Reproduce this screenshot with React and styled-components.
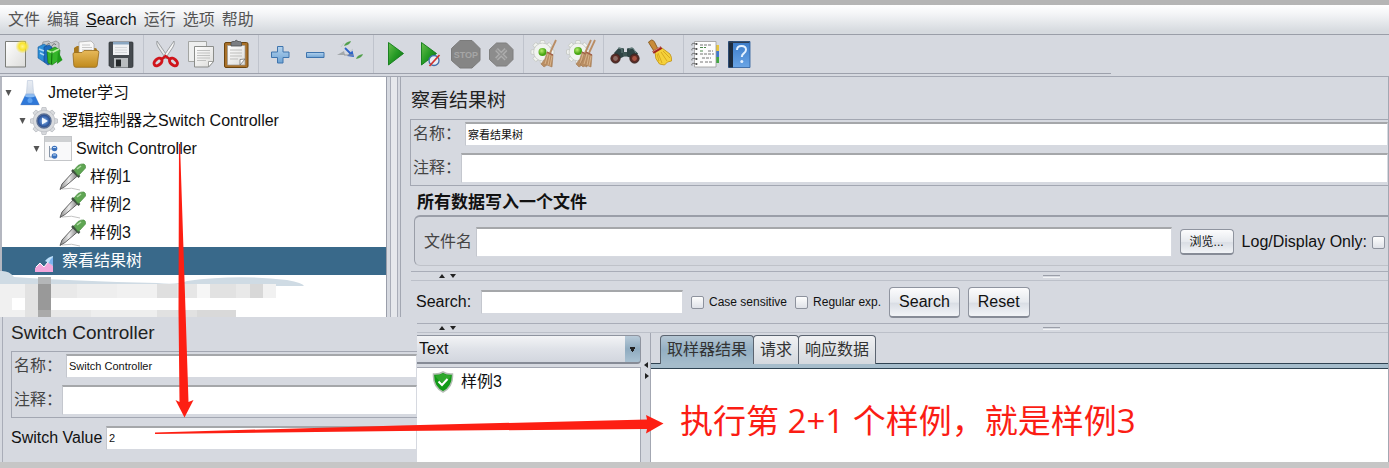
import React, { useState } from 'react';
import styled, { createGlobalStyle, css } from 'styled-components';

const GlobalStyle = createGlobalStyle`
  * { box-sizing: border-box; }

  body {
    margin: 0;
    background: #d6d9e0;
    color: #111;
    font-family: 'Liberation Sans', 'Noto Sans CJK SC', sans-serif;
    font-size: 16px;
    line-height: 20px;
  }

  button, input, select { font: inherit; color: inherit; }
`;

// --- Window frame ---

const Window = styled.div`
  position: relative;
  display: flex;
  flex-direction: column;
  min-height: 100vh;
  overflow: hidden;
  border-top: 5px solid #b5b5b5;
  border-bottom: 6px solid #c6c6c6;
`;

const MenuBar = styled.nav`
  display: flex;
  align-items: center;
  gap: 7px;
  height: 30px;
  padding: 0 8px;
  background: linear-gradient(#fff 0%, #f4f5f7 30%, #d6dadf 90%);
  border-bottom: 1px solid #9a9ea8;
`;

const MenuItem = styled.button`
  padding: 0;
  border: none;
  background: none;
  color: ${props => (props.$latin ? '#111' : '#555')};
  white-space: nowrap;
`;

const ToolBarArea = styled.div`
  padding-bottom: 2px;
  border-bottom: 1px solid #a3a7b2;
`;

const ToolBar = styled.div`
  display: flex;
  align-items: center;
  gap: 2px;
  height: 39px;
  width: 80%;
  border-bottom: 1px solid #9da1ac;
`;

const ToolButton = styled.button`
  display: flex;
  width: 33px;
  padding: 0;
  border: none;
  background: none;
`;

const ToolSeparator = styled.span`
  align-self: stretch;
  width: 8px;
  background: linear-gradient(90deg, transparent 3px, #bfc3cc 3px, #bfc3cc 4px, transparent 4px);
`;

const Workspace = styled.main`
  position: relative;
  display: flex;
  flex: 1;
`;

// --- Test plan tree ---

const TreePane = styled.div`
  position: relative;
  width: 387px;
  flex: none;
  padding: 2px 0 0;
  background: #fff;
  border-left: 2px solid #b4b7c0;
  border-right: 1px solid #9a9eaa;
`;

const Tree = styled.ul`
  margin: 0;
  padding: 0;
  list-style: none;
`;

const TreeRow = styled.li`
  display: flex;
  align-items: center;
  height: 28px;
  padding-left: ${props => props.$level * 14}px;
  white-space: nowrap;
  ${props => props.$selected && css`
    background: #39698a;
    color: #fff;
  `}
`;

const Twisty = styled.span`
  width: 14px;
  svg { display: block; margin-left: 3px; }
`;

const TreeIcon = styled.span`
  display: flex;
  width: 32px;
`;

const Smudge = styled.svg`
  position: absolute;
  left: -2px;
  top: 170px;
`;

const Splitter = styled.div`
  width: 13px;
  flex: none;
  background: linear-gradient(90deg, transparent 3px, #a9adb8 3px, #a9adb8 4px, #e6e8ec 4px, #e6e8ec 10px, #a9adb8 10px, #a9adb8 11px, transparent 11px);
`;

// --- Forms ---

const Detail = styled.section`
  flex: 1;
  min-width: 0;
  display: flex;
  flex-direction: column;
  border-left: 1px solid #a3a7b2;
  border-right: 1px solid #a3a7b2;
`;

const PaneTitle = styled.h1`
  margin: 0;
  padding: ${props => (props.$compact ? '4px 0 6px 8px' : '12px 0 6px 10px')};
  font-size: 19px;
  line-height: 24px;
  font-weight: normal;
  color: #222;
`;

const NameGroup = styled.div`
  display: flex;
  flex-direction: column;
  gap: 7px;
  margin-left: ${props => (props.$compact ? 8 : 9)}px;
  padding: 2px 0 2px 2px;
  border: 1px solid #a3a7b2;
  border-right: none;
`;

const FieldRow = styled.div`
  display: flex;
  align-items: center;
`;

const FieldLabel = styled.label`
  width: ${props => props.$width}px;
  flex: none;
  color: ${props => (props.$latin ? '#111' : '#444')};
`;

const TextField = styled.input`
  min-width: 0;
  flex: ${props => (props.$width ? 'none' : 1)};
  width: ${props => (props.$width ? `${props.$width}px` : 'auto')};
  height: ${props => (props.$tall ? 30 : 24)}px;
  padding: 0 2px 2px;
  border: 1px solid #c4c7ce;
  border-top: 2px solid #a5a7aa;
  border-right-color: #d6d9e0;
  border-bottom-color: #d6d9e0;
  background: #fff;
  font-size: 11px;
  outline: none;
`;

const SectionTitle = styled.h2`
  margin: 0;
  padding: 7px 0 2px 16px;
  font-size: 17px;
  line-height: 20px;
  font-weight: bold;
`;

const FileGroup = styled.div`
  display: flex;
  align-items: center;
  height: 51px;
  margin-left: 13px;
  padding: 2px 3px 0 9px;
  border: 1px solid #9a9ea8;
  border-top: 2px solid #9a9ea8;
  border-right: none;
  border-bottom-color: #bfc2c9;
  border-radius: 6px 0 0 6px;
  background: #d4d7de;
`;

const PushButton = styled.button`
  flex: none;
  height: ${props => (props.$small ? 26 : 31)}px;
  padding: 0 9px;
  border: 1px solid #8f949f;
  border-bottom: 2px solid #868b96;
  border-radius: 4px;
  background: linear-gradient(#fcfcfd, #e6e9ee 50%, #dadee5 55%, #f2f4f7);
  font-size: ${props => (props.$small ? 12 : 16)}px;
  line-height: 20px;
`;

const CheckLabel = styled.label`
  margin-left: ${props => (props.$small ? 5 : 8)}px;
  white-space: nowrap;
  font-size: ${props => (props.$small ? 12 : 16)}px;
`;

const Check = styled.input`
  appearance: none;
  flex: none;
  width: 13px;
  height: 13px;
  margin: 0;
  border: 1px solid #8d929d;
  border-radius: 2px;
  background: linear-gradient(#fdfdfd, #dfe2e8);
  &:checked { background: #39698a; }
`;

const Spacer = styled.span`
  flex: none;
  width: ${props => props.$width || 8}px;
`;

const SplitBar = styled.div`
  display: flex;
  align-items: center;
  height: 10px;
  margin: ${props => (props.$spaced ? '5px' : '0')} 0 0 10px;
  border-top: 1px solid #a9adb8;
  border-bottom: 1px solid #bcc0c9;
  svg { margin-left: 28px; }
`;

const Grip = styled.span`
  width: 17px;
  height: 3px;
  margin-left: 60%;
  border-top: 1px solid #9a9ea8;
  border-bottom: 1px solid #f2f3f5;
`;

const SearchRow = styled.div`
  display: flex;
  align-items: center;
  height: 42px;
  padding-left: 15px;
`;

// --- Results area ---

const Results = styled.div`
  display: flex;
  flex: 1;
  padding-left: 15px;
`;

const ResultList = styled.div`
  display: flex;
  flex-direction: column;
  width: 225px;
  flex: none;
`;

const Renderer = styled.select`
  appearance: none;
  height: 29px;
  margin: 2px 0 3px;
  padding: 0 2px;
  border: 1px solid #8f949f;
  border-bottom: 2px solid #868b96;
  border-radius: 0 4px 4px 0;
  background:
    linear-gradient(#222, #222) right 5px top 11px / 5px 2px no-repeat,
    linear-gradient(#222, #222) right 6px top 13px / 3px 2px no-repeat,
    linear-gradient(#222, #222) right 7px top 15px / 1px 1px no-repeat,
    linear-gradient(#b9cbd9, #8fabc0 50%, #a9c1d2) right / 15px 100% no-repeat,
    linear-gradient(#f3f4f6, #dfe2e8 50%, #d2d6de);
`;

const SampleList = styled.ul`
  flex: 1;
  margin: 0;
  padding: 3px 0 0 16px;
  list-style: none;
  background: #fff;
  border-top: 1px solid #a3a7b2;
  border-right: 1px solid #a3a7b2;
`;

const Sample = styled.li`
  display: flex;
  align-items: center;
  gap: 7px;
`;

const ResultSplitter = styled.div`
  width: 10px;
  flex: none;
  padding: 29px 0 0 2px;
  border-right: 1px solid #a3a7b2;
  svg { display: block; }
`;

const TabPane = styled.div`
  display: flex;
  flex-direction: column;
  flex: 1;
  min-width: 0;
`;

const TabStrip = styled.div`
  display: flex;
  height: 35px;
  padding: 2px 0 0 9px;
  border-bottom: 4px solid #a5bccb;
  box-shadow: inset 0 -1px #2f4352, 0 1px #2f4352;
`;

const Tab = styled.button`
  padding: 0 6px;
  margin-right: -1px;
  border: 1px solid #5b6470;
  border-bottom: none;
  border-radius: 4px 4px 0 0;
  background: ${props => (props.$active
    ? 'linear-gradient(#b5c6d3, #93afc3 50%, #a5bccb)'
    : 'linear-gradient(#f0f1f3, #dfe2e6 60%, #d4d8de)')};
  color: #333;
  white-space: nowrap;
`;

const TabBody = styled.div`
  flex: 1;
  margin-top: 1px;
  background: #fff;
`;

// --- Things laid over the window ---

const SwitchPanel = styled.section`
  position: absolute;
  left: 0;
  bottom: 0;
  width: 417px;
  height: 145px;
  padding-left: 3px;
  background: #d6d9e0;
  box-shadow: inset 2px 0 #d6d9e0, inset 3px 0 #a9adb8;
`;

const ValueRow = styled.div`
  display: flex;
  align-items: center;
  padding: 8px 0 0 8px;
`;

const Arrows = styled.svg`
  position: absolute;
  left: 0;
  top: -5px;
  pointer-events: none;
`;

const Note = styled.p`
  position: absolute;
  left: 680px;
  top: 392px;
  margin: 0;
  color: #fb1d14;
  font-family: 'Open Sans', 'Noto Sans CJK SC', sans-serif;
  font-size: 33px;
  line-height: 48px;
  white-space: nowrap;
`;

// --- Icons ---

const Defs = () => (
  <svg width="0" height="0" style={{ position: 'absolute' }} aria-hidden="true">
    <defs>
      <linearGradient id="paper" x2="1" y2="1"><stop stopColor="#fff" /><stop offset="1" stopColor="#dcdcda" /></linearGradient>
      <radialGradient id="sun"><stop stopColor="#fff48a" /><stop offset=".5" stopColor="#f8e32b" /><stop offset="1" stopColor="#f8e32b" stopOpacity="0" /></radialGradient>
      <linearGradient id="folder" x2="0" y2="1"><stop stopColor="#e7b95a" /><stop offset="1" stopColor="#c08a1c" /></linearGradient>
      <linearGradient id="sky" x2="0" y2="1"><stop stopColor="#b4d3ee" /><stop offset="1" stopColor="#6ea3d4" /></linearGradient>
      <linearGradient id="go" x2="1" y2="1"><stop stopColor="#6bbf4e" /><stop offset=".5" stopColor="#259b25" /><stop offset="1" stopColor="#0d6b12" /></linearGradient>
      <linearGradient id="book" x2="0" y2="1"><stop stopColor="#3a7bc8" /><stop offset="1" stopColor="#6aa5e6" /></linearGradient>
      <linearGradient id="flask" x2="0" y2="1"><stop stopColor="#e9edf3" /><stop offset=".5" stopColor="#d3dce8" /><stop offset=".65" stopColor="#3f86df" /><stop offset="1" stopColor="#1455bd" /></linearGradient>
      <radialGradient id="blueBall"><stop stopColor="#b9d6f6" /><stop offset=".5" stopColor="#4a78bd" /><stop offset="1" stopColor="#1c3d80" /></radialGradient>
      <radialGradient id="greenBall" cx=".4" cy=".35"><stop stopColor="#b8ee6d" /><stop offset="1" stopColor="#47a512" /></radialGradient>
      <linearGradient id="steel" x2="1" y2="0"><stop stopColor="#888" /><stop offset=".5" stopColor="#eee" /><stop offset="1" stopColor="#777" /></linearGradient>
    </defs>
  </svg>
);

const Gear = ({ cx, cy, r, fill, stroke }) => (
  <g fill={fill} stroke={stroke} strokeWidth=".8">
    {[0, 45, 90, 135, 180, 225, 270, 315].map(a => (
      <path key={a} transform={`rotate(${a} ${cx} ${cy})`} d={`M${cx - 2.8} ${cy - r + 4} l.8 -4 h4 l.8 4z`} />
    ))}
    <circle cx={cx} cy={cy} r={r - 2.6} />
  </g>
);

const SmallBroom = ({ x = 0 }) => (
  <g transform={`translate(${x} 0)`}>
    <path d="M26 2 L20 15" stroke="#b98d64" strokeWidth="1.8" />
    <path d="M17 14 L23 17 L22 29 L17 27 L14 29 L11 26 Q16 21 17 14z" fill="#b88d62" stroke="#a27b54" strokeWidth=".6" />
    <path d="M18 16 L15 26 M20 17 L18 27 M22 18 L20 28" stroke="#dfbd94" strokeWidth=".8" />
    <path d="M17 14 L23 17" stroke="#a15a45" strokeWidth="1.2" />
  </g>
);

const toolIcons = {
  new: (
    <>
      <path d="M5.5 3.5h20v25.500h-20z" fill="url(#paper)" stroke="#7b7d78" />
      <circle cx="22.500" cy="8.500" r="7" fill="url(#sun)" />
    </>
  ),
  templates: (
    <>
      <path d="M7 8l1-4 6-1 2 2 5-2 3 2v6H8z" fill="#c6c9cb" stroke="#8e9193" strokeWidth=".8" />
      <path d="M11 8q2-4 4-2M17 8q2-4 4-1" fill="none" stroke="#77797b" />
      <path d="M3 9l6-3 3 2v15l-3 1-6-4z" fill="#2d8fd6" stroke="#1a5a9c" strokeWidth=".6" />
      <path d="M9 9l5-2 3 2v16l-4 2-4-3z" fill="#1d6cc0" stroke="#124686" strokeWidth=".6" />
      <path d="M12 13l8-4 5 3-1 10-7 5-4-2z" fill="#35b52a" stroke="#126b0e" strokeWidth=".6" />
      <path d="M12 12.500l5 2 7-3.500" fill="none" stroke="#b5ee9f" strokeWidth="1.800" />
      <path d="M17 14l-.5 12" stroke="#0f6f0d" />
      <path d="M23 13l4.500 9-5.500 4z" fill="#1f9a1a" />
      <path d="M4 11l5 2M5 15l4 2" stroke="#a8d6f5" strokeWidth="1.400" />
    </>
  ),
  open: (
    <>
      <path d="M4 10l3-2h6l2 2h10q2 0 2 2v15H4z" fill="#a8771b" />
      <path d="M9 4l12-1 3 3v12H9z" fill="#f8f8f8" stroke="#a7a7a7" strokeWidth=".7" />
      <path d="M12 7h8M12 9.500h10M12 12h10" stroke="#bbb" strokeWidth=".8" />
      <path d="M3 16q0-1.500 2-1.500h7l2-2h13q2 0 1.800 2l-1.600 13q-.3 1.800-2 1.800H6q-2 0-2.200-2z" fill="url(#folder)" stroke="#96691a" strokeWidth=".8" />
    </>
  ),
  save: (
    <>
      <path d="M4 5q0-1 1-1h22q1 0 1 1v23q0 1.500-1.500 1.500H6L4 27.500z" fill="#454a4f" stroke="#2c3033" strokeWidth=".7" />
      <path d="M8 4h16v13H8z" fill="#eff1f3" />
      <path d="M8 4h16v2.500H8z" fill="#8aa7c2" />
      <path d="M10 9.500h12M10 12h12M10 14.500h12" stroke="#d3d6d9" />
      <path d="M9 20h14v9.500H9z" fill="#b9bdc0" />
      <path d="M11 21.500h5v7h-5z" fill="#23272a" />
    </>
  ),
  cut: (
    <>
      <path d="M7 3q-1 3 1 6l8 12 2-2z" fill="#e9eaeb" stroke="#8c8f92" strokeWidth=".8" />
      <path d="M24 3q1 3-1 6l-8 12-2-2z" fill="#f7f7f7" stroke="#8c8f92" strokeWidth=".8" />
      <ellipse cx="8" cy="24" rx="3" ry="4.600" transform="rotate(48 8 24)" fill="none" stroke="#d0141b" strokeWidth="3" />
      <ellipse cx="23.500" cy="24" rx="3" ry="4.600" transform="rotate(-48 23.500 24)" fill="none" stroke="#d0141b" strokeWidth="3" />
      <path d="M12 21l3.500-3 4 3" fill="none" stroke="#d0141b" strokeWidth="2.400" />
    </>
  ),
  copy: (
    <>
      <path d="M3.500 3.500h18v20h-18z" fill="#eeefef" stroke="#a3a5a3" />
      <path d="M9.500 8.500h19v15l-5 5.500h-14z" fill="url(#paper)" stroke="#8b8d8a" />
      <path d="M28.500 23.500l-5 5.500v-5.500z" fill="#fff" stroke="#8b8d8a" strokeWidth=".8" />
      <path d="M12 12.500h13M12 15h13M12 17.500h13M12 20h13M12 22.500h9" stroke="#c0c1c0" />
    </>
  ),
  paste: (
    <>
      <rect x="4.500" y="4.500" width="23.500" height="25" rx="1.500" fill="#a9712a" stroke="#6b450f" />
      <path d="M7.500 7.500h17.500v19.500H7.500z" fill="url(#paper)" stroke="#9b9b98" strokeWidth=".7" />
      <path d="M11 5q0-1.500 2-1.500h1.500Q16.300 1 18 3.500h1.500q2 0 2 1.500v3H11z" fill="#7b7e82" stroke="#4c4e50" strokeWidth=".8" />
      <path d="M10 12h12M10 15h12M10 18h12M10 21h8" stroke="#bdbdbb" />
      <path d="M25 21l-5 6v-5.500z" fill="#fff" stroke="#666" strokeWidth=".7" />
    </>
  ),
  plus: <path d="M12.500 8.500h5.500v5.500h6v5.500h-6V25h-5.500v-5.500h-6V14h6z" fill="url(#sky)" stroke="#3f74ad" />,
  minus: <path d="M6.500 14.500h17.500v5H6.500z" fill="url(#sky)" stroke="#3f74ad" />,
  toggle: (
    <>
      <path d="M2 17l7-4 1 4z" fill="#a3a8ab" />
      <path d="M9 5l-3 4M18 11l-5 4" stroke="#c3c8cc" />
      <path d="M10 10l6 6" stroke="#2c62c9" strokeWidth="1.800" />
      <path d="M19 19l-7-1 5.500-5.500z" fill="#2c62c9" />
      <path d="M9 8q1-4 7-5-1 4-7 5z" fill="#53a04d" />
      <path d="M21 21q1-4 7-5-1 4-7 5z" fill="#53a04d" />
      <path d="M9 17h9" stroke="#999" />
    </>
  ),
  start: <path d="M8.500 4.500L23.500 15.500 8.500 27z" fill="url(#go)" stroke="#0f7a16" strokeWidth=".9" />,
  startNoPause: (
    <>
      <path d="M6.500 4.500L21.500 15.500 6.500 27z" fill="url(#go)" stroke="#0f7a16" strokeWidth=".9" />
      <circle cx="19" cy="22.500" r="5" fill="#e9eef5" stroke="#426ea9" strokeWidth="1.300" />
      <path d="M14.500 28L24.500 17" stroke="#d2342f" strokeWidth="1.800" />
    </>
  ),
  stop: (
    <>
      <path d="M10 2.500h12L30 10.500v12L22 30H10L1.500 22.500v-12z" fill="#858585" stroke="#7b7b7b" />
      <text x="15.800" y="20" textAnchor="middle" fontSize="9" fontWeight="bold" fontFamily="Liberation Sans" fill="#a6a6a6">STOP</text>
    </>
  ),
  shutdown: (
    <>
      <path d="M11.500 5h10L28 11.500v10L21.500 28h-10L4.500 21.500v-10z" fill="#8c8c8c" stroke="#7f7f7f" />
      <path d="M11.500 11.500l9.500 9.500M21 11.500L11.500 21" stroke="#adadad" strokeWidth="4" />
      <path d="M11.500 11.500l9.500 9.500M21 11.500L11.500 21" stroke="#939393" strokeWidth="1.500" />
    </>
  ),
  clear: (
    <>
      <Gear cx={12.5} cy={14} r={11.5} fill="#f1f3f0" stroke="#c3c6c1" />
      <circle cx="12.500" cy="14" r="4" fill="url(#greenBall)" />
      <SmallBroom />
    </>
  ),
  clearAll: (
    <>
      <Gear cx={13} cy={14} r={11.5} fill="#f1f3f0" stroke="#c3c6c1" />
      <circle cx="13" cy="13" r="4" fill="url(#greenBall)" />
      <SmallBroom />
      <SmallBroom x={4} />
    </>
  ),
  search: (
    <>
      <path d="M4 15L9 9.500l5 1v5h3v-5l5-1 6 6-3 6-8-3h-3l-6 3z" fill="#2e4444" />
      <path d="M8 10l4 1v4M19 11l4-1 3 5" fill="none" stroke="#6b8584" />
      <circle cx="5.500" cy="20.500" r="4.600" fill="#5a2a24" stroke="#392522" />
      <circle cx="5.500" cy="20.500" r="2.400" fill="#8b6a63" />
      <circle cx="24.500" cy="20.500" r="4.600" fill="#5a2a24" stroke="#392522" />
      <circle cx="24.500" cy="20.500" r="2.400" fill="#a85342" />
      <path d="M13 14h4v4h-4z" fill="#3d5553" />
    </>
  ),
  reset: (
    <>
      <path d="M3.500 4l3-2q2 0 3 2l4 8-4 2-5-8z" fill="#c88b39" stroke="#7c4f12" strokeWidth=".8" />
      <path d="M10 14l7-4 8 6q2 3 1.500 7l-4 1-3 3-5-1q-5-5-4.500-12z" fill="#f5d13a" stroke="#c08f12" strokeWidth=".8" />
      <path d="M13 15l4 10M16 14l6 9M18 13l7 7M12 16l2 7" stroke="#cf9e18" strokeWidth=".8" />
      <path d="M8 14.500l8.500-5" stroke="#a1261d" strokeWidth="3" />
      <path d="M8 13.500l7.500-4.500" stroke="#e8b6a8" strokeWidth=".7" />
    </>
  ),
  functions: (
    <>
      <path d="M26 7h3v6h-3z" fill="#e8c53c" />
      <path d="M26 13h3v6h-3z" fill="#3e78cf" />
      <path d="M26 19h3v6h-3z" fill="#42a842" />
      <path d="M4.500 3.500H26v25.500H4.500z" fill="#fdfdfd" stroke="#999" strokeWidth=".8" />
      {[6, 11, 16, 21, 26].map(y => (
        <g key={y}>
          <circle cx="6.500" cy={y} r="1" fill="#444" />
          <path d={`M6 ${y} q-5 -2 -4 1.500`} fill="none" stroke="#666" strokeWidth=".9" />
        </g>
      ))}
      <path d="M10 7h12M18 13h5M10 16h14M12 20h9M10 24h3M15 24h8" stroke="#777" strokeDasharray="3 1" />
      <path d="M10 9.500h6M10 13h4" stroke="#4c8a4c" strokeDasharray="3 1" />
    </>
  ),
  help: (
    <>
      <path d="M3.500 3.500H25V29.500H3.500z" fill="url(#book)" stroke="#2a5c9b" strokeWidth=".8" />
      <path d="M3.500 3.500H8V29.500H3.500z" fill="#1d2c3e" />
      <path d="M4 3.500h21l-1 1.500H4z" fill="#2c3d52" />
      <path d="M12 12q0-4 4.500-4t4.500 3.800q0 2-2.200 3.500-2 1.400-2 3.700" fill="none" stroke="#e4f1ff" strokeWidth="2" />
      <circle cx="16.800" cy="23.500" r="1.500" fill="#e4f1ff" />
    </>
  ),
};

const ToolIcon = ({ name }) => (
  <svg width="32" height="32" viewBox="0 0 32 32" fill="none">{toolIcons[name]}</svg>
);

const FlaskIcon = () => (
  <svg width="28" height="28" viewBox="0 0 28 28">
    <path d="M11.500 1.500h5l1 12 6 12.500H4.500l6-12.500z" fill="url(#flask)" stroke="#b9c6da" strokeWidth=".6" />
    <path d="M9 17l10 0 4 8.500H5z" fill="#2f78d8" />
    <ellipse cx="14" cy="17" rx="5" ry="1.400" fill="#8bbcf2" />
    <circle cx="14" cy="21.500" r="2.500" fill="#5da1f0" />
  </svg>
);

const GroupIcon = () => (
  <svg width="28" height="28" viewBox="0 0 28 28">
    <Gear cx={14} cy={14} r={13.5} fill="#d9dbde" stroke="#bcbfc4" />
    <circle cx="14" cy="14" r="7" fill="url(#blueBall)" stroke="#5a6f94" strokeWidth="1.500" />
    <path d="M12 10.500l6 3.500-6 3.500z" fill="#f2f8ff" />
  </svg>
);

const ControllerIcon = () => (
  <svg width="28" height="26" viewBox="0 0 28 26">
    <rect x=".5" y=".5" width="27" height="24" fill="#f9f9fa" stroke="#c4c6c9" />
    <path d="M1 1h26v5H1z" fill="#cfd1d3" />
    <path d="M5.500 10v11h4M5.500 13h4" fill="none" stroke="#8896a8" />
    <circle cx="10.500" cy="12.500" r="2.800" fill="#3c72bd" />
    <circle cx="10.500" cy="20" r="2.800" fill="#3c72bd" />
    <path d="M9 11.500h3M9 19h3" stroke="#c3dcf7" />
  </svg>
);

const DropperIcon = () => (
  <svg width="28" height="28" viewBox="0 0 28 28">
    <path d="M4 26q10-2 18 1" fill="none" stroke="#c4c4c4" />
    <path d="M16 8l4 4.500L7 23.500l-5 3 2-5.500z" fill="url(#steel)" stroke="#555" strokeWidth=".9" />
    <path d="M14 7l7.500 7" stroke="#3f5140" strokeWidth="2.600" />
    <path d="M16 7l4-4.500q3-2 6-1.500 2 1 1.500 4l-5.500 6-2 1.500z" fill="#5fa653" stroke="#4b8d42" strokeWidth=".7" />
    <path d="M19 6l4-3" stroke="#b5dca9" strokeWidth="1.500" />
  </svg>
);

const ChartIcon = () => (
  <svg width="25" height="26" viewBox="-5 -7 25 26">
    <path d="M0 13l5-5 4 4 4-5 5 4v6H0z" fill="#f3a7dc" />
    <path d="M1 12l4-4 4 4 4-5" fill="none" stroke="#fff" />
    <path d="M10 6q3-4 8-5v10l-4-3z" fill="#bfe0fa" />
    <path d="M14 8q1-4 4-6v8z" fill="#79b1ee" />
  </svg>
);

const ShieldIcon = () => (
  <svg width="22" height="22" viewBox="0 0 22 22">
    <path d="M11 1q4 2.500 9.500 2 .8 13-9.500 18Q.7 16 1.500 3 7 3.500 11 1z" fill="#109a16" stroke="#b4bdb4" strokeWidth="1.500" />
    <path d="M11 2.500q4 2 8 2-1 4-8 7.500-5-2-8-7.500 4 0 8-2z" fill="#2ea82c" />
    <path d="M6.500 10.500l3.500 3.500 5.500-6" fill="none" stroke="#fff" strokeWidth="2" />
  </svg>
);

const UpDown = () => (
  <svg width="18" height="6" viewBox="0 0 18 6">
    <path d="M0 5l3-4 3 4zM11 1h6l-3 4z" fill="#222" />
  </svg>
);

// --- Data ---

const menus = ['文件', '编辑', 'Search', '运行', '选项', '帮助'];

const tools = [
  ['new', 'templates', 'open', 'save'],
  ['cut', 'copy', 'paste'],
  ['plus', 'minus', 'toggle'],
  ['start', 'startNoPause', 'stop', 'shutdown'],
  ['clear', 'clearAll'],
  ['search', 'reset'],
  ['functions', 'help'],
];

const nodes = [
  { level: 0, label: 'Jmeter学习', icon: FlaskIcon, open: true },
  { level: 1, label: '逻辑控制器之Switch Controller', icon: GroupIcon, open: true },
  { level: 2, label: 'Switch Controller', icon: ControllerIcon, open: true },
  { level: 3, label: '样例1', icon: DropperIcon },
  { level: 3, label: '样例2', icon: DropperIcon },
  { level: 3, label: '样例3', icon: DropperIcon },
  { level: 1, label: '察看结果树', icon: ChartIcon, selected: true },
];

const tabs = ['取样器结果', '请求', '响应数据'];

// x, y, width, height, colour of the blurred-out blocks under the tree
const blocks = [
  [0, 10, 25, 33, '#f0f0f0'], [12, 24, 13, 12, '#fff'], [25, 10, 13, 33, '#e2e2e2'],
  [38, 3, 13, 7, '#b4b6b8'], [38, 10, 13, 26, '#999'], [38, 36, 13, 7, '#aaa'],
  [51, 10, 26, 14, '#e9e9e9'], [77, 10, 40, 14, '#eee'], [117, 10, 40, 14, '#f1f1f1'],
  [157, 10, 20, 14, '#dfdfdf'], [177, 10, 20, 14, '#e6e6e6'], [197, 10, 13, 14, '#f6f6f6'], [210, 10, 26, 14, '#e2e2e2'],
  [236, 10, 14, 14, '#e9e9e9'], [250, 10, 13, 14, '#d8d8d8'], [263, 10, 13, 14, '#f1f1f1'],
  [51, 36, 40, 7, '#e8e8e8'], [91, 36, 66, 7, '#eee'], [157, 36, 40, 7, '#e1e1e1'], [197, 36, 39, 7, '#d9d9d9'],
];

const NameFields = ({ id, name, compact }) => (
  <NameGroup $compact={compact}>
    <FieldRow>
      <FieldLabel htmlFor={`${id}-name`} $width={52}>名称：</FieldLabel>
      <TextField id={`${id}-name`} defaultValue={name} />
    </FieldRow>
    <FieldRow>
      <FieldLabel htmlFor={`${id}-comment`} $width={48}>注释：</FieldLabel>
      <TextField id={`${id}-comment`} $tall />
    </FieldRow>
  </NameGroup>
);

const App = () => {
  const [activeTab, setActiveTab] = useState(tabs[0]);

  return (
    <Window>
      <GlobalStyle />
      <Defs />

      <MenuBar>
        {menus.map(m => (
          <MenuItem key={m} type="button" $latin={m === 'Search'}>
            {m === 'Search' ? <><u>S</u>earch</> : m}
          </MenuItem>
        ))}
      </MenuBar>

      <ToolBarArea>
        <ToolBar role="toolbar">
          {tools.map((group, i) => (
            <React.Fragment key={group[0]}>
              {i > 0 && <ToolSeparator />}
              {group.map(name => (
                <ToolButton key={name} type="button" aria-label={name}><ToolIcon name={name} /></ToolButton>
              ))}
            </React.Fragment>
          ))}
        </ToolBar>
      </ToolBarArea>

      <Workspace>
        <TreePane>
          <Tree>
            {nodes.map(({ level, label, icon: Icon, open, selected }) => (
              <TreeRow key={label} $level={level} $selected={selected}>
                <Twisty>
                  {open && <svg width="7" height="6" viewBox="0 0 7 6"><path d="M.5 0h6L3.500 6z" fill="#555" /></svg>}
                </Twisty>
                <TreeIcon><Icon /></TreeIcon>
                {label}
              </TreeRow>
            ))}
          </Tree>
          <Smudge width="310" height="70" viewBox="0 -27 310 70">
            <path d="M0-3q9-1 14 6 60 4 143 6 20 2 30-2 50-7 100-1 16 3 17 6H0z" fill="#cfdbe4" />
            {blocks.map(([x, y, w, h, fill]) => (
              <rect key={`${x}-${y}`} x={x} y={y} width={w} height={h} fill={fill} />
            ))}
          </Smudge>
        </TreePane>
        <Splitter />

        <Detail>
          <PaneTitle>察看结果树</PaneTitle>
          <NameFields id="listener" name="察看结果树" />

          <SectionTitle>所有数据写入一个文件</SectionTitle>
          <FileGroup>
            <FieldLabel htmlFor="file" $width={52}>文件名</FieldLabel>
            <TextField id="file" $tall />
            <Spacer />
            <PushButton type="button" $small>浏览...</PushButton>
            <CheckLabel htmlFor="log-only">Log/Display Only:</CheckLabel>
            <Spacer $width={5} />
            <Check id="log-only" type="checkbox" />
          </FileGroup>

          <SplitBar $spaced><UpDown /><Grip /></SplitBar>
          <SearchRow>
            <FieldLabel htmlFor="search" $width={65} $latin>Search:</FieldLabel>
            <TextField id="search" $width={202} />
            <Spacer />
            <Check id="case" type="checkbox" />
            <CheckLabel htmlFor="case" $small>Case sensitive</CheckLabel>
            <Spacer />
            <Check id="regexp" type="checkbox" />
            <CheckLabel htmlFor="regexp" $small>Regular exp.</CheckLabel>
            <Spacer />
            <PushButton type="button">Search</PushButton>
            <Spacer />
            <PushButton type="button">Reset</PushButton>
          </SearchRow>
          <SplitBar><UpDown /><Grip /></SplitBar>

          <Results>
            <ResultList>
              <Renderer aria-label="Renderer" defaultValue="Text">
                <option>Text</option>
              </Renderer>
              <SampleList>
                <Sample><ShieldIcon />样例3</Sample>
              </SampleList>
            </ResultList>
            <ResultSplitter>
              <svg width="6" height="18" viewBox="0 0 6 18">
                <path d="M5 0v6L1 3zM2 11v6l4-3z" fill="#222" />
              </svg>
            </ResultSplitter>
            <TabPane>
              <TabStrip role="tablist">
                {tabs.map(t => (
                  <Tab
                    key={t}
                    type="button"
                    role="tab"
                    aria-selected={t === activeTab}
                    $active={t === activeTab}
                    onClick={() => setActiveTab(t)}
                  >
                    {t}
                  </Tab>
                ))}
              </TabStrip>
              <TabBody role="tabpanel" />
            </TabPane>
          </Results>
        </Detail>

        <SwitchPanel>
          <PaneTitle as="h2" $compact>Switch Controller</PaneTitle>
          <NameFields id="switch" name="Switch Controller" compact />
          <ValueRow>
            <FieldLabel htmlFor="switch-value" $width={95} $latin>Switch Value</FieldLabel>
            <TextField id="switch-value" defaultValue="2" />
          </ValueRow>
        </SwitchPanel>
      </Workspace>

      <Arrows width="670" height="468" viewBox="0 0 670 468" fill="#fd1f13">
        <path d="M179 144h1L185.500 310l3 92 5-2L184.500 417.500 175.500 400l4 2-1-92z" />
        <path d="M155 432.500L400 425.500 647 419.500 646 415 663.500 423.500 646 433.500 647 429 400 431 155 434z" />
      </Arrows>
      <Note>执行第 2+1 个样例，就是样例3</Note>
    </Window>
  );
};

export default App;
